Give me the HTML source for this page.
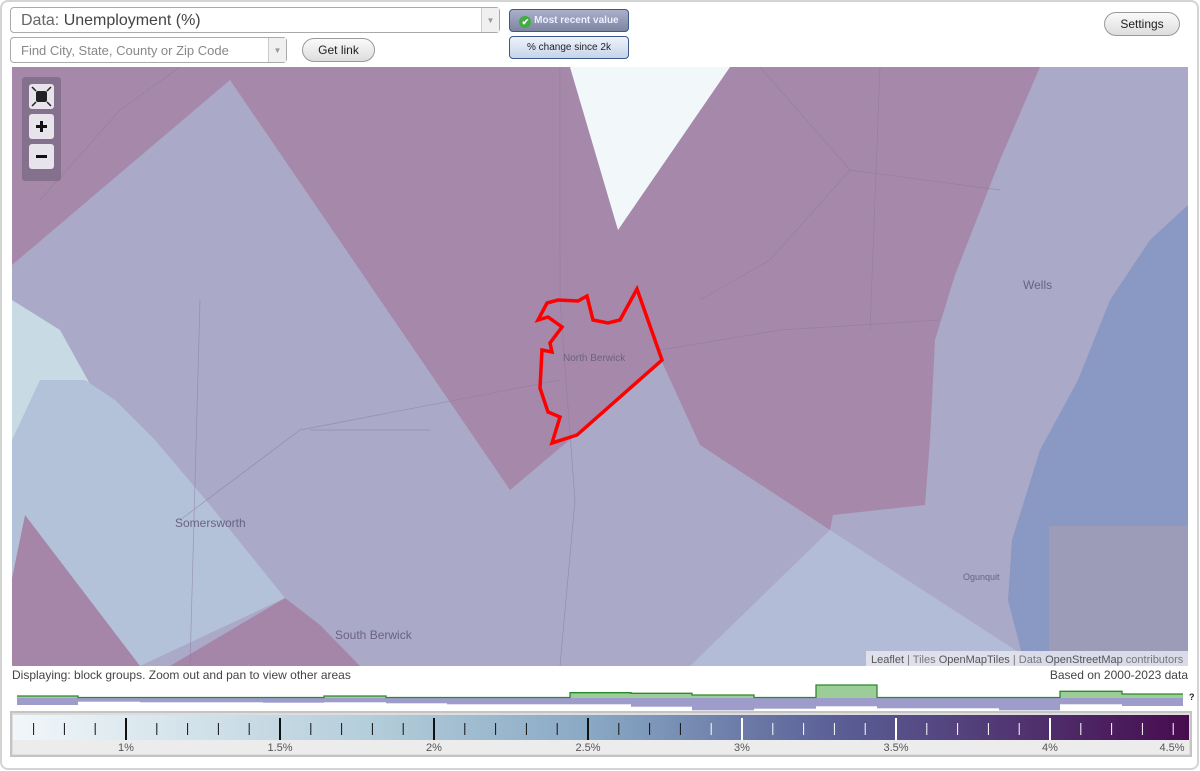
<!DOCTYPE html>
<html><head><meta charset="utf-8"><style>
*{box-sizing:border-box;margin:0;padding:0}
body{width:1200px;height:771px;background:#fff;font-family:"Liberation Sans",sans-serif;position:relative;overflow:hidden}
.frame{position:absolute;left:0;top:0;width:1199px;height:770px;border:2px solid #d4d4d4;border-radius:8px}
.sel{position:absolute;background:#fff;border:1px solid #aaa;border-radius:4px;color:#444}
.sel .arr{position:absolute;right:0;top:0;bottom:0;width:18px;border-left:1px solid #ccc;background:#f0f0f0;color:#999;font-size:8px;text-align:center}
.btn{position:absolute;border:1px solid #999;border-radius:12px;background:linear-gradient(#fafafa,#ddd);font-size:12px;color:#222;text-align:center}
.tb{position:absolute;left:509px;width:120px;border:1px solid #3a5a8a;border-radius:4px;font-size:10px;text-align:center}
</style></head><body>
<div class="frame"></div>
<div class="sel" style="left:10px;top:7px;width:490px;height:26px;font-size:16px;line-height:25px;padding-left:10px"><span style="color:#666">Data:</span> Unemployment (%)<div class="arr" style="line-height:25px">▼</div></div>
<div class="sel" style="left:10px;top:37px;width:277px;height:26px;font-size:13px;line-height:25px;padding-left:10px;color:#888">Find City, State, County or Zip Code<div class="arr" style="line-height:25px">▼</div></div>
<div class="btn" style="left:302px;top:38px;width:73px;height:24px;line-height:22px">Get link</div>
<div class="btn" style="left:1104px;top:12px;width:76px;height:24px;line-height:22px">Settings</div>
<div class="tb" style="top:9px;height:23px;line-height:21px;background:linear-gradient(#aab0c8,#7c85a2);color:#eef;font-weight:bold"><span style="display:inline-block;width:12px;height:12px;border-radius:6px;background:#4a4;color:#fff;font-size:9px;line-height:12px;vertical-align:-2px">✔</span> Most recent value</div>
<div class="tb" style="top:36px;height:23px;line-height:21px;background:linear-gradient(#eef3fb,#c6d4ea);color:#222">% change since 2k</div>

<svg style="position:absolute;left:0;top:0" width="1200" height="771">
<rect x="12" y="67" width="1176" height="599" fill="#aaa9c7"/>
<polygon points="12,300 60,330 110,420 12,578" fill="#c8dbe4"/>
<polygon points="40,380 85,380 115,400 155,440 210,505 285,598 140,666 110,666 25,515 12,578 12,440" fill="#b3c1d9"/>
<polygon points="12,578 25,515 140,666 12,666" fill="#a586a8"/>
<polygon points="170,666 285,598 320,625 360,666" fill="#a586a8"/>
<polygon points="690,666 830,530 1040,666" fill="#b2bcd6"/>
<polygon points="1188,205 1150,240 1110,300 1078,380 1040,450 1012,540 1008,600 1025,666 1188,666" fill="#8a98c4"/>
<rect x="1049" y="526" width="139" height="126" fill="#9c9cb8"/>
<polygon points="12,67 570,67 618,230 662,362 510,490 230,80 12,265" fill="#a688aa"/>
<polygon points="730,67 1040,67 1000,160 955,275 935,340 930,440 925,505 833,515 830,530 700,445 662,362 618,230" fill="#a688aa"/>
<polygon points="570,67 730,67 618,230" fill="#f2f7f9"/>
<g fill="none" stroke="#8a7a9a" stroke-width="0.7" opacity="0.6">
<path d="M40,200 L120,110 L180,67"/><path d="M760,67 L850,170 L1000,190"/><path d="M850,170 L770,260 L700,300"/>
<path d="M560,67 L560,300 L575,500 L560,666"/><path d="M180,520 L300,430 L560,380"/><path d="M660,350 L780,330 L940,320"/>
<path d="M310,430 L430,430"/><path d="M200,300 L190,666"/><path d="M880,67 L870,330"/>
</g>
<polygon points="547,303 558,300 578,301 587,296 593,320 608,323 620,320 637,289 662,360 577,435 552,443 560,417 548,412 540,388 542,350 552,352 550,343 562,327 548,317 538,320" fill="none" stroke="#f00" stroke-width="3.5" stroke-linejoin="miter"/>
<g font-family="Liberation Sans,sans-serif" fill="#6a6380">
<text x="563" y="361" font-size="10">North Berwick</text>
<text x="175" y="527" font-size="12">Somersworth</text>
<text x="335" y="639" font-size="12">South Berwick</text>
<text x="1023" y="289" font-size="12">Wells</text>
<text x="963" y="580" font-size="9">Ogunquit</text>
</g>
<rect x="22" y="77" width="39" height="104" rx="3" fill="#7d6a86" opacity="0.8"/>
<g fill="#e8e4ec"><rect x="29" y="84" width="25" height="25" rx="3"/><rect x="29" y="114" width="25" height="25" rx="3"/><rect x="29" y="144" width="25" height="25" rx="3"/></g>
<rect x="36" y="91" width="11" height="11" rx="2" fill="#222"/>
<path d="M32,87l4,4M51,87l-4,4M32,106l4,-4M51,106l-4,-4" stroke="#222" stroke-width="1.5"/>
<path d="M41.5,121v11M36,126.5h11" stroke="#111" stroke-width="3"/>
<path d="M36,156.5h11" stroke="#111" stroke-width="3"/>
<rect x="866" y="651" width="322" height="15" fill="#e6e6ee" opacity="0.85"/>
<text x="871" y="663" font-size="11" font-family="Liberation Sans,sans-serif" fill="#777"><tspan fill="#555">Leaflet</tspan> | Tiles <tspan fill="#555">OpenMapTiles</tspan> | Data <tspan fill="#555">OpenStreetMap</tspan> contributors</text>
<text x="12" y="679" font-size="12" font-family="Liberation Sans,sans-serif" fill="#444">Displaying: block groups. Zoom out and pan to view other areas</text>
<text x="1188" y="679" font-size="12" font-family="Liberation Sans,sans-serif" fill="#444" text-anchor="end">Based on 2000-2023 data</text>
<g id="hist"></g>
<defs><linearGradient id="g" x1="0" x2="1"><stop offset="0" stop-color="#f1f7fa"/><stop offset="0.3" stop-color="#b5cedb"/><stop offset="0.5" stop-color="#87a6c3"/><stop offset="0.7" stop-color="#5a5f96"/><stop offset="1" stop-color="#470c4e"/></linearGradient></defs>
<rect x="11" y="712" width="1180" height="44" fill="#ddd" stroke="#c4c4c4" stroke-width="2"/>
<rect x="13" y="715" width="1176" height="25" fill="url(#g)"/>
<rect x="13" y="740" width="1176" height="14" fill="#ececec"/>
<g id="ticks"></g>
<g font-size="11" font-family="Liberation Sans,sans-serif" fill="#555" text-anchor="middle">
<text x="126" y="751">1%</text><text x="280" y="751">1.5%</text><text x="434" y="751">2%</text><text x="588" y="751">2.5%</text><text x="742" y="751">3%</text><text x="896" y="751">3.5%</text><text x="1050" y="751">4%</text><text x="1172" y="751">4.5%</text></g>
<text x="1189" y="700" font-size="9" font-weight="bold" fill="#222">?</text>
</svg>
<script>
var b=[[17,696,705],[78,697.5,701.7],[140,697.5,702.3],[201,697.5,702.3],[263,697.5,702.7],[324,696,702.3],[386,697.5,703.3],[447,697.5,704.3],[508,697.5,704.3],[570,692.7,704.3],[631,693.3,706.7],[692,695,710.3],[754,697.5,708.7],[816,685,706.3],[877,697.5,708.3],[938,697.5,708.3],[999,697.5,710.3],[1060,691.3,704.3],[1122,694,706]];
var s='',gl='M17,'+b[0][1];
for(var i=0;i<b.length;i++){var x=b[i][0],w=(i<b.length-1?b[i+1][0]:1183)-x;
s+='<rect x="'+x+'" y="'+b[i][1]+'" width="'+w+'" height="'+(697.7-b[i][1])+'" fill="#9ccc98"/>';
s+='<rect x="'+x+'" y="697.7" width="'+w+'" height="'+(b[i][2]-697.7)+'" fill="#9d9ccb"/>';
gl+=' L'+x+','+b[i][1]+' L'+(x+w)+','+b[i][1];}
s+='<path d="'+gl+'" fill="none" stroke="#2a8a2a" stroke-width="1.3"/>';
document.getElementById('hist').innerHTML=s;
var t='';for(var k=-3;k<=35;k++){var x=126+k*30.8;if(x<20||x>1186)continue;var maj=(k%5==0);var c=x>700?'#fff':'#111';
t+='<line x1="'+x+'" x2="'+x+'" y1="'+(maj?718:723)+'" y2="'+(maj?740:735)+'" stroke="'+c+'" stroke-width="'+(maj?2:1)+'"/>';}
document.getElementById('ticks').innerHTML=t;
</script>
</body></html>
